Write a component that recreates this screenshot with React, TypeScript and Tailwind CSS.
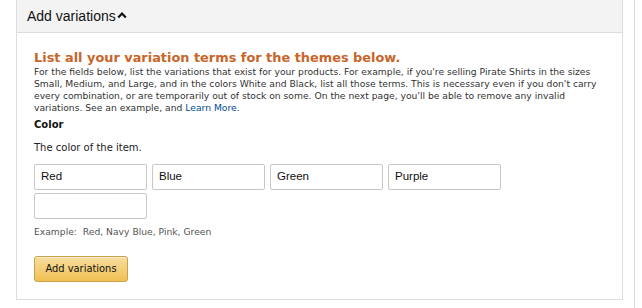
import React from "react";

const verdana = { fontFamily: '"DejaVu Sans", Verdana, sans-serif' };

export default function App() {
  const vals = ["Red", "Blue", "Green", "Purple"];
  return (
    <div className="w-[642px] h-[308px] bg-white flex overflow-hidden">
      <div className="ml-[16px] w-[607px] h-[300px] border-x border-b border-[#dddddd] flex flex-col">
        <div className="h-[33px] bg-[#f3f3f3] border-b border-[#dddddd] flex items-center pl-[10px] shrink-0">
          <span className="text-[14px] text-[#111] font-['Liberation_Sans',Arial,sans-serif]">Add variations</span>
          <svg width="10" height="8" viewBox="0 0 10 8" className="ml-[1px] mt-[-2px]">
            <path d="M1.2 6.5 L5 2.5 L8.8 6.5" fill="none" stroke="#111" strokeWidth="2.2" />
          </svg>
        </div>
        <div className="pl-[17px] pt-[17px]" style={verdana}>
          <h2 className="text-[12.9px] font-bold text-[#c8652a] leading-[16px]">
            List all your variation terms for the themes below.
          </h2>
          <p className="text-[9.2px] leading-[12px] text-[#333] w-[585px]">
            For the fields below, list the variations that exist for your products. For example, if you're selling Pirate Shirts in the sizes
            <br />
            Small, Medium, and Large, and in the colors White and Black, list all those terms. This is necessary even if you don't carry
            <br />
            every combination, or are temporarily out of stock on some. On the next page, you'll be able to remove any invalid
            <br />
            variations. See an example, and <span className="text-[#004b91]">Learn More</span>.
          </p>
          <div className="mt-[5px] text-[10px] font-bold text-[#111] leading-[12px]">Color</div>
          <div className="mt-[11px] text-[10px] text-[#222] leading-[12px]">The color of the item.</div>
          <div className="mt-[10px] flex flex-wrap gap-x-[5px] gap-y-[3px] w-[480px]">
            {[...vals, ""].map((v, i) => (
              <div
                key={i}
                className="w-[113px] h-[26px] border border-[#c8c8c8] rounded-[2px] flex items-center pl-[6px] text-[11.5px] text-[#111] font-['Liberation_Sans',Arial,sans-serif]"
              >
                {v}
              </div>
            ))}
          </div>
          <div className="mt-[7px] text-[9.2px] text-[#555] leading-[12px]">Example:&nbsp; Red, Navy Blue, Pink, Green</div>
          <button className="mt-[18px] w-[94px] h-[26px] rounded-[3px] border border-[#c8a14a] bg-gradient-to-b from-[#f8dd9e] to-[#f0c050] text-[9.9px] text-[#111] flex items-center justify-center shadow-[inset_0_1px_0_rgba(255,255,255,0.5)]" style={verdana}>
            Add variations
          </button>
        </div>
      </div>
      <div className="ml-[11px] w-px h-full bg-[#d8d8d8]" />
    </div>
  );
}
